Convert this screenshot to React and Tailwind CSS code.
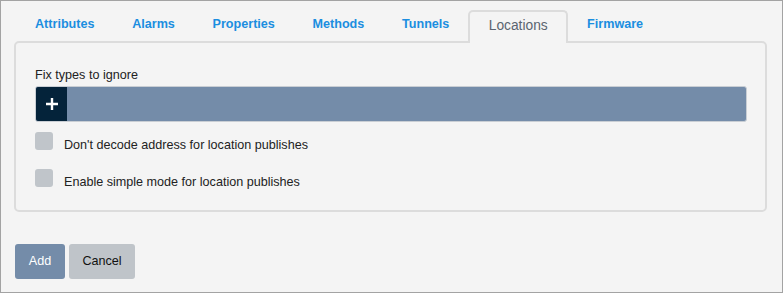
import React from "react";

const tabs = ["Attributes", "Alarms", "Properties", "Methods", "Tunnels", "Locations", "Firmware"];

const Checkbox = ({ label }) => (
  <label className="flex items-start gap-[11px] h-[18px]">
    <span className="w-[18px] h-[18px] rounded-[3px] bg-[#c0c5ca] shrink-0" />
    <span className="mt-[6px] text-[12.6px] leading-[15px] text-[#222]">{label}</span>
  </label>
);

export default function App() {
  const active = "Locations";

  return (
    <div
      className="w-[783px] h-[293px] border border-[#a3a3a3] bg-[#f4f4f4] pt-[9px]"
      style={{ fontFamily: '"Liberation Sans", Arial, sans-serif' }}
    >
      {/* Tabs */}
      <div className="flex ml-[15px] h-[33px] -mb-[2px] relative z-10">
        {tabs.map((t) =>
          t === active ? (
            <div
              key={t}
              className="px-[18.5px] pt-[6px] border-2 border-b-0 border-[#dcdcdc] rounded-t-[5px] bg-[#f4f4f4] text-[13.8px] leading-[16px] text-[#5a6470]"
            >
              {t}
            </div>
          ) : (
            <button
              key={t}
              className="px-[18.85px] first:pl-[19px] pt-[7px] self-start text-[12.6px] leading-[15px] font-bold text-[#1b8ee0]"
            >
              {t}
            </button>
          )
        )}
      </div>

      {/* Panel */}
      <div className="ml-[13px] w-[753px] border-2 border-[#dcdcdc] rounded-[5px] pt-[25px] pl-[19px] pr-[18px] pb-[23px]">
        <div className="text-[12.6px] leading-[15px] text-[#222] mb-[3px]">Fix types to ignore</div>
        <div className="flex h-[36px] rounded-[3px] overflow-hidden bg-[#748ca9] border border-[#c9ced4]">
          <button className="w-[31px] bg-[#04233a] flex items-center justify-center">
            <svg width="12" height="12" viewBox="0 0 12 12">
              <path d="M6 0v12M0 6h12" stroke="#fff" strokeWidth="2.4" />
            </svg>
          </button>
        </div>
        <div className="mt-[10px] flex flex-col gap-[19px]">
          <Checkbox label="Don't decode address for location publishes" />
          <Checkbox label="Enable simple mode for location publishes" />
        </div>
      </div>

      {/* Actions */}
      <div className="flex gap-[4px] ml-[14px] mt-[32px]">
        <button className="w-[50px] h-[35px] rounded-[3px] bg-[#748ca9] text-white text-[12.6px]">Add</button>
        <button className="w-[66px] h-[35px] rounded-[3px] bg-[#bfc4c9] text-[#111] text-[12.6px]">Cancel</button>
      </div>
    </div>
  );
}
